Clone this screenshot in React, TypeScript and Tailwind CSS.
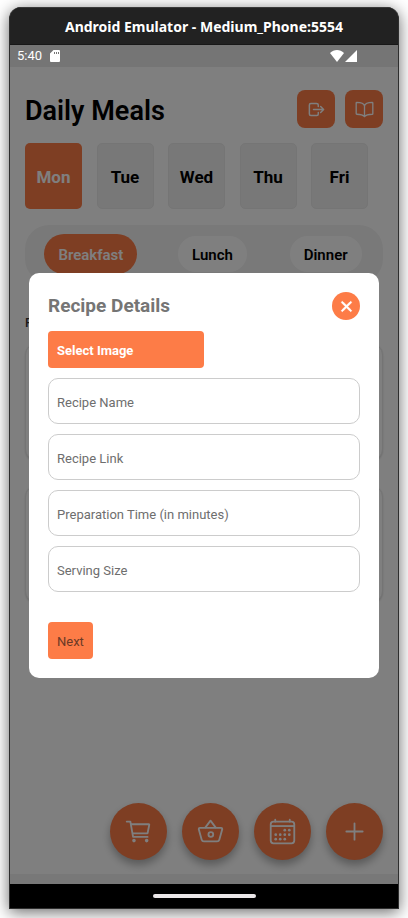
import type { ReactNode } from "react";
import {
  IoAdd,
  IoBasketOutline,
  IoBookOutline,
  IoCalendarOutline,
  IoCartOutline,
  IoClose,
  IoLogOutOutline,
} from "react-icons/io5";

const days = ["Mon", "Tue", "Wed", "Thu", "Fri"];
const meals = ["Breakfast", "Lunch", "Dinner"];
const fields = [
  { id: "name", label: "Recipe Name" },
  { id: "link", label: "Recipe Link" },
  { id: "time", label: "Preparation Time (in minutes)" },
  { id: "servings", label: "Serving Size" },
];

function StatusBar() {
  return (
    <div className="relative z-20 flex h-[22px] items-center justify-between bg-[#757575] pl-[7px] pr-[41px] text-[13px] text-white">
      <div className="flex items-center gap-2">
        <span>5:40</span>
        <svg className="h-3 w-2.5" viewBox="0 0 10 12" aria-hidden="true">
          <path
            fill="currentColor"
            fillRule="evenodd"
            d="M3.5 0H9a1 1 0 0 1 1 1v10a1 1 0 0 1-1 1H1a1 1 0 0 1-1-1V3.5zM4 2v2h1V2zM6 2v2h1V2zM8 2v2h1V2z"
          />
        </svg>
      </div>
      <div className="flex items-center gap-px">
        <svg className="h-3 w-3.5" viewBox="0 0 14 12" aria-hidden="true">
          <path fill="currentColor" d="M7 12 0 3C4-1 10-1 14 3z" />
        </svg>
        <svg className="h-3 w-3" viewBox="0 0 12 12" aria-hidden="true">
          <path fill="currentColor" d="M12 0v12H0z" />
        </svg>
      </div>
    </div>
  );
}

function HeaderButton({ label, children }: { label: string; children: ReactNode }) {
  return (
    <button
      aria-label={label}
      className="flex size-[38px] items-center justify-center rounded-lg bg-[#fd7c47] text-white"
    >
      {children}
    </button>
  );
}

function Fab({ label, children }: { label: string; children: ReactNode }) {
  return (
    <button
      aria-label={label}
      className="flex size-[57px] items-center justify-center rounded-full bg-[#fd7c47] text-[29px] text-white shadow-[0_5px_8px_rgba(0,0,0,0.3)]"
    >
      {children}
    </button>
  );
}

function MealsScreen() {
  return (
    <main className="flex flex-1 flex-col bg-white px-[15px] pb-3.5 pt-[23px]">
      <header className="flex items-start justify-between">
        <h1 className="text-[27px] font-semibold leading-[42px] text-black">Daily Meals</h1>
        <div className="flex gap-2.5">
          <HeaderButton label="Log out">
            <IoLogOutOutline className="size-[19px] [&_path]:[stroke-width:40px]" />
          </HeaderButton>
          <HeaderButton label="Recipe book">
            <IoBookOutline className="size-[19px] [&_path]:[stroke-width:36px]" />
          </HeaderButton>
        </div>
      </header>

      <nav className="mt-[11px] flex justify-between pr-[15px]">
        {days.map((day, i) => (
          <button
            key={day}
            className={
              i === 0
                ? "h-[66px] w-[57px] rounded-[5px] bg-[#fd7c47] pt-1 text-[17px] font-bold text-white"
                : "h-[66px] w-[57px] rounded-[5px] border border-[#ebebeb] bg-[#f0f0f0] pt-1 text-[17px] font-bold text-black"
            }
          >
            {day}
          </button>
        ))}
      </nav>

      <div className="mt-4 flex justify-around rounded-[24px] bg-[#f3f3f3] py-[9px]">
        {meals.map((meal, i) => (
          <button
            key={meal}
            className={
              i === 0
                ? "h-10 rounded-full bg-[#fd7c47] px-3.5 pt-0.5 text-[15px] font-semibold text-white"
                : "h-10 rounded-full border-2 border-[#f3f3f3] bg-white px-3.5 pt-0.5 text-[15px] font-semibold text-black"
            }
          >
            {meal}
          </button>
        ))}
      </div>

      <h2 className="mt-8 text-[13px] font-medium leading-4 text-[#333]">Recipes</h2>
      <div className="mt-3 flex flex-col gap-6">
        <article className="h-[118px] rounded-xl border border-[#e8e8e8] bg-white shadow-[0_1px_2px_rgba(0,0,0,0.15)]" />
        <article className="h-[118px] rounded-xl border border-[#e8e8e8] bg-white shadow-[0_1px_2px_rgba(0,0,0,0.15)]" />
      </div>

      <div className="mt-auto flex justify-end gap-[15px]">
        <Fab label="Shopping cart">
          <IoCartOutline />
        </Fab>
        <Fab label="Pantry basket">
          <IoBasketOutline />
        </Fab>
        <Fab label="Meal calendar">
          <IoCalendarOutline />
        </Fab>
        <Fab label="Add recipe">
          <IoAdd />
        </Fab>
      </div>
    </main>
  );
}

function RecipeDialog() {
  return (
    <div className="absolute inset-0 z-10 flex items-center bg-black/50 px-[19px] pb-0.5">
      <form
        role="dialog"
        aria-labelledby="dialog-title"
        className="w-full rounded-[10px] bg-white p-[19px] text-[13px]"
      >
        <div className="flex h-7 items-center justify-between">
          <h2 id="dialog-title" className="text-[19px] font-bold text-[#757575]">
            Recipe Details
          </h2>
          <button
            type="button"
            aria-label="Close"
            className="flex size-7 items-center justify-center rounded-full bg-[#fd7c47] text-white"
          >
            <IoClose className="size-[19px]" stroke="currentColor" strokeWidth={16} />
          </button>
        </div>
        <button
          type="button"
          className="mt-[11px] h-[37px] w-1/2 rounded bg-[#fd7c47] px-[9px] pt-0.5 text-left font-bold text-white"
        >
          Select Image
        </button>
        <div className="mt-2.5 flex flex-col gap-2.5">
          {fields.map((field) => (
            <input
              key={field.id}
              id={field.id}
              aria-label={field.label}
              placeholder={field.label}
              className="h-[46px] w-full rounded-[10px] border border-[#ccc] bg-white px-2 pt-0.5 text-[#333] placeholder:text-[#6e6e6e]"
            />
          ))}
        </div>
        <button type="button" className="mt-[30px] h-[37px] rounded bg-[#fd7c47] px-[9px] pt-0.5 text-[#6b3a26]">
          Next
        </button>
      </form>
    </div>
  );
}

export default function App() {
  return (
    <div className="flex min-h-screen flex-col bg-white px-[9px] pb-[9px] pt-[7px] font-['Roboto',sans-serif]">
      <div className="flex flex-1 flex-col overflow-hidden rounded-t-xl border border-t-0 border-[#2e2e2e] bg-[#222] shadow-[0_3px_16px_rgba(0,0,0,0.6)]">
        <div className="h-[38px] border-b border-t border-b-[#181818] border-t-[#3a3a3a] text-center font-['Noto_Sans',sans-serif] text-[14px] font-bold leading-[38px] text-white">
          Android Emulator - Medium_Phone:5554
        </div>
        <div className="relative flex flex-1 flex-col">
          <StatusBar />
          <MealsScreen />
          <div className="h-2.5 bg-[#f0f0f0]" />
          <div className="relative z-20 flex h-6 items-center justify-center bg-black">
            <div className="h-1 w-[103px] rounded-full bg-[#ebe7e9]" />
          </div>
          <RecipeDialog />
        </div>
      </div>
    </div>
  );
}
